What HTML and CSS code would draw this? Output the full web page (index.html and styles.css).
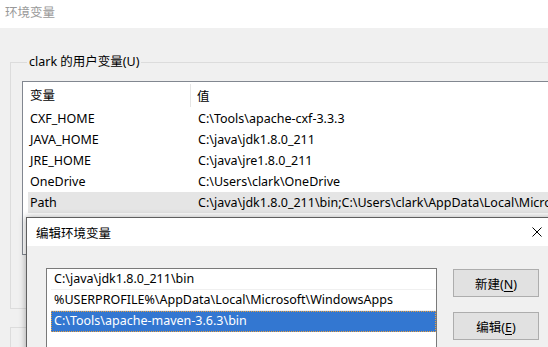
FILE: index.html
```html
<!DOCTYPE html>
<html lang="zh-CN">
<head>
    <meta charset="UTF-8">
    <title>环境变量</title>
    <link rel="stylesheet" href="styles.css">
</head>
<body>
    <div class="window">
        <div class="titlebar">环境变量</div>
        <div class="window-body">
            <fieldset class="group">
                <legend>clark 的用户变量(U)</legend>
                <div class="listview">
                    <div class="lv-head">
                        <div class="col-name">变量</div>
                        <div class="col-value">值</div>
                    </div>
                    <div class="lv-row"><span class="col-name">CXF_HOME</span><span class="col-value">C:\Tools\apache-cxf-3.3.3</span></div>
                    <div class="lv-row"><span class="col-name">JAVA_HOME</span><span class="col-value">C:\java\jdk1.8.0_211</span></div>
                    <div class="lv-row"><span class="col-name">JRE_HOME</span><span class="col-value">C:\java\jre1.8.0_211</span></div>
                    <div class="lv-row"><span class="col-name">OneDrive</span><span class="col-value">C:\Users\clark\OneDrive</span></div>
                    <div class="lv-row selected"><span class="col-name">Path</span><span class="col-value">C:\java\jdk1.8.0_211\bin;C:\Users\clark\AppData\Local\Microsoft\WindowsApps;</span></div>
                </div>
            </fieldset>
            <fieldset class="group group-system">
                <legend>系统变量(S)</legend>
            </fieldset>
        </div>
    </div>

    <div class="dialog">
        <div class="dialog-title">
            <span>编辑环境变量</span>
            <span class="close">
                <svg viewBox="0 0 10 10" width="10" height="10">
                    <path d="M0.5 0.5L9.5 9.5M9.5 0.5L0.5 9.5" stroke="#000" stroke-width="1" fill="none"/>
                </svg>
            </span>
        </div>
        <div class="dialog-body">
            <div class="listbox">
                <div class="lb-item">C:\java\jdk1.8.0_211\bin</div>
                <div class="lb-item">%USERPROFILE%\AppData\Local\Microsoft\WindowsApps</div>
                <div class="lb-item selected">C:\Tools\apache-maven-3.6.3\bin</div>
            </div>
            <div class="buttons">
                <button class="btn">新建(<u>N</u>)</button>
                <button class="btn">编辑(<u>E</u>)</button>
            </div>
        </div>
    </div>
</body>
</html>
```

FILE: styles.css
```css
* {
    margin: 0;
    padding: 0;
    box-sizing: border-box;
}

body {
    font-family: "Noto Sans", "Noto Sans CJK SC", sans-serif;
    font-size: 12.5px;
    color: #000;
    width: 548px;
    height: 347px;
    overflow: hidden;
    position: relative;
    background: #f0f0f0;
}

/* outer window */
.titlebar {
    height: 28px;
    line-height: 26px;
    padding-left: 5px;
    background: #fff;
    color: #999;
}

.window-body {
    background: #f0f0f0;
    padding: 0 0 0 10px;
    width: 700px;
}

.group {
    border: 1px solid #dcdcdc;
    margin-top: 26px;
    padding: 11px 0 53px 11px;
}

.group legend {
    margin-left: 5px;
    padding: 0 2px;
    line-height: 16px;
}

.group-system {
    margin-top: 10px;
    height: 60px;
}

.listview {
    width: 620px;
    height: 174px;
    background: #fff;
    border: 1px solid #828790;
}

.lv-head {
    display: flex;
    height: 25px;
    align-items: center;
    margin-top: 1px;
}

.lv-head .col-name {
    width: 168px;
    height: 23px;
    line-height: 23px;
    padding-left: 7px;
    border-right: 1px solid #e5e5e5;
}

.lv-head .col-value {
    padding-left: 6px;
}

.lv-row {
    display: flex;
    height: 21px;
    line-height: 21px;
    margin-left: 5px;
    white-space: nowrap;
}

.lv-row .col-name {
    width: 163px;
    padding-left: 2px;
    flex-shrink: 0;
}

.lv-row .col-value {
    padding-left: 7px;
}

.lv-row.selected {
    background: #e5e5e5;
}

/* edit dialog */
.dialog {
    position: absolute;
    left: 26px;
    top: 217px;
    width: 560px;
    height: 200px;
    border: 1px solid #5f5f5f;
    background: #f0f0f0;
    box-shadow: 0 0 7px rgba(0, 0, 0, 0.35);
}

.dialog-title {
    height: 28px;
    background: #fff;
    display: flex;
    align-items: center;
    justify-content: space-between;
    padding-left: 9px;
}

.close {
    width: 46px;
    height: 28px;
    display: flex;
    align-items: center;
    justify-content: center;
    margin-right: 25px;
}

.close svg {
    display: block;
}

.dialog-body {
    display: flex;
    gap: 16px;
    padding: 22px 0 0 19px;
}

.listbox {
    width: 391px;
    height: 120px;
    background: #fff;
    border: 1px solid #7a7a7a;
    padding: 0 0 0 4px;
}

.lb-item {
    height: 21px;
    line-height: 20px;
    padding-left: 3px;
    border-bottom: 1px solid #f0f0f0;
    white-space: nowrap;
    overflow: hidden;
}

.lb-item.selected {
    background: #3377d1;
    color: #fff;
    outline: 1px dotted #e8a040;
    outline-offset: -1px;
    border-bottom-color: #3377d1;
}

.buttons {
    display: flex;
    flex-direction: column;
    gap: 15px;
    padding-top: 1px;
}

.btn {
    width: 86px;
    height: 28px;
    background: #e1e1e1;
    border: 1px solid #adadad;
    font-family: "Noto Sans", "Noto Sans CJK SC", sans-serif;
    font-size: 12.5px;
    color: #000;
}

.btn u {
    text-underline-offset: 2px;
}
```
